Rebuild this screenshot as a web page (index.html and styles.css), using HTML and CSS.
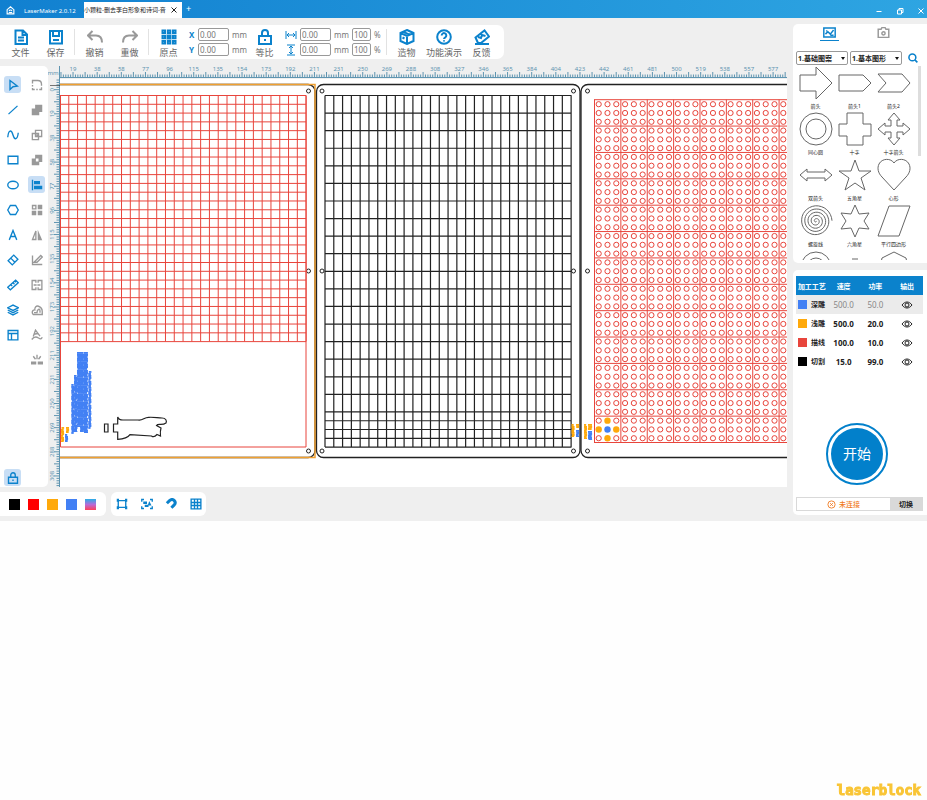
FILE: index.html
```html
<!DOCTYPE html>
<html lang="zh-CN">
<head>
  <meta charset="UTF-8">
  <title>LaserMaker 2.0.12</title>
  <link rel="stylesheet" href="styles.css">
</head>
<body>
  <div class="app">
    <header class="titlebar">
      <svg class="home" viewBox="0 0 16 16"><path d="M2 8V6.5L8 1.5l6 5V14H2V8M5 11.5h6M5.5 9a2.6 2.6 0 0 1 5 0"/></svg>
      <span class="app-name">LaserMaker 2.0.12</span>
      <div class="tab"><span class="tab-name">小颗粒-删去李白形象和诗词-音</span><button class="tab-close" aria-label="关闭标签"><svg viewBox="0 0 8 8"><path d="M1.500 1.500l5 5M6.500 1.500l-5 5"/></svg></button></div>
      <button class="tab-add" aria-label="新建">+</button>
      <div class="window-buttons">
        <button aria-label="最小化"><svg viewBox="0 0 8 8"><path d="M1.500 4.500h5"/></svg></button>
        <button aria-label="还原"><svg viewBox="0 0 8 8"><path d="M1.500 3h4v4h-4zM3 3V1.500h4v4H5.500"/></svg></button>
        <button aria-label="关闭"><svg viewBox="0 0 8 8"><path d="M1.500 1.500l5 5M6.500 1.500l-5 5"/></svg></button>
      </div>
    </header>

    <div class="body">
      <main class="main">
        <div class="toolbar">
          <button class="tool"><svg viewBox="0 0 16 16"><path d="M2.500 1.500h7.500l4 4v9.500H2.500zM9.500 1.500v4.500H14M5 8.500h6M5 11.500h6"/></svg>文件</button>
          <button class="tool"><svg viewBox="0 0 16 16"><path d="M2 2h12v12.500H2zM5 2v5h6V2M5 11h6"/></svg>保存</button>
          <span class="sep"></span>
          <button class="tool gray"><svg viewBox="0 0 16 16"><path d="M5.500 2L1 6.500 5.500 11M1.500 6.500H9c4 0 6 3 6 7"/></svg>撤销</button>
          <button class="tool gray"><svg viewBox="0 0 16 16"><path d="M10.500 2L15 6.500 10.500 11M14.500 6.500H7c-4 0-6 3-6 7"/></svg>重做</button>
          <span class="sep"></span>
          <button class="tool"><svg class="dots" viewBox="0 0 16 16"><path d="M1.500 1.500h2.500v2.500h-2.500zM6.800 1.500h2.500v2.500H6.800zM12 1.500h2.500v2.500h-2.500zM1.500 6.800h2.500v2.500h-2.500zM12 6.800h2.500v2.500h-2.500zM1.500 12h2.500v2.500h-2.500zM6.800 12h2.500v2.500H6.800zM12 12h2.500v2.500h-2.500z"/><path class="fill" d="M5.500 5.500h5v5h-5z"/></svg>原点</button>
          <div class="fields coords">
            <label><b>X</b><input value="0.00"><span>mm</span></label>
            <label><b>Y</b><input value="0.00"><span>mm</span></label>
          </div>
          <button class="tool"><svg viewBox="0 0 16 16"><path d="M2 7h12v8H2zM5 7V4a3 3 0 0 1 6 0v3M8 10v2"/></svg>等比</button>
          <div class="fields size">
            <div class="field-row">
              <svg viewBox="0 0 12 12"><path d="M1 2v8M11 2v8M2 6h8M4 4L2 6l2 2M8 4l2 2-2 2"/></svg>
              <input value="0.00" aria-label="宽度"><span>mm</span><input class="short" value="100" aria-label="宽度百分比"><span>%</span>
            </div>
            <div class="field-row">
              <svg viewBox="0 0 12 12"><path d="M2 1h8M2 11h8M6 2v8M4 4l2-2 2 2M4 8l2 2 2-2"/></svg>
              <input value="0.00" aria-label="高度"><span>mm</span><input class="short" value="100" aria-label="高度百分比"><span>%</span>
            </div>
          </div>
          <span class="sep"></span>
          <button class="tool"><svg viewBox="0 0 16 16"><path d="M8 1l6.500 3v8L8 15l-6.500-3V4zM1.500 4L8 7l6.500-3M8 7v8M4.500 2.800L11 5.800M3.500 8.500l2 1"/></svg>造物</button>
          <button class="tool wide"><svg viewBox="0 0 16 16"><circle cx="8" cy="8" r="6.800"/><path d="M5.700 6.500a2.300 2.300 0 1 1 3.600 1.800C8.300 8.900 8 9.200 8 10M8 11.200v1.300"/></svg>功能演示</button>
          <button class="tool"><svg viewBox="0 0 16 16"><path d="M1 15h14M4 14L1.500 8.500 10.500 1.500l4.500 6L7 14zM4 8l3 1 1-3 3.500 1"/></svg>反馈</button>
        </div>

        <div class="workspace">
          <nav class="sidebar">
            <div class="tool-column">
              <button class="on" aria-label="选择"><svg viewBox="0 0 16 16"><path d="M4 2l10 7.500-6 .8L4 14z"/></svg></button>
              <button aria-label="直线"><svg viewBox="0 0 16 16"><path d="M2 13.500L14 2.500"/></svg></button>
              <button aria-label="曲线"><svg viewBox="0 0 16 16"><path d="M1 11C2 0 6 1 8 8s6 7 7-3"/></svg></button>
              <button aria-label="矩形"><svg viewBox="0 0 16 16"><path d="M1.500 3h13v10h-13z"/></svg></button>
              <button aria-label="椭圆"><svg viewBox="0 0 16 16"><ellipse cx="8" cy="8" rx="7" ry="5"/></svg></button>
              <button aria-label="多边形"><svg viewBox="0 0 16 16"><path d="M4.500 2h7L15 8l-3.500 6h-7L1 8z"/></svg></button>
              <button aria-label="文字"><svg viewBox="0 0 16 16"><path d="M3 14.500L8 2l5 12.500M5 10h6"/></svg></button>
              <button aria-label="橡皮"><svg viewBox="0 0 16 16"><path d="M1.500 9L9 1.500 14.500 7 7 14.500zM5 5.500l5.500 5.500"/></svg></button>
              <button aria-label="测量"><svg viewBox="0 0 16 16"><path d="M1 11L11.500 1.500 15 5 4.500 14.500zM5 7.500l2 2M8 5l2 2M10.500 3l1.500 1.500"/></svg></button>
              <button aria-label="图层"><svg viewBox="0 0 16 16"><path d="M1 5l7-3.500L15 5 8 8.500zM1 8l7 3.500L15 8M1 11l7 3.500 7-3.500"/></svg></button>
              <button aria-label="排版"><svg viewBox="0 0 16 16"><path d="M1.500 2h13v12.500h-13zM1.500 6h13M6 6v8.500"/></svg></button>
              <button class="on lock" aria-label="锁定"><svg viewBox="0 0 16 16"><path d="M2 7h12v8H2zM5 7V4a3 3 0 0 1 6 0v3M8 10v2"/></svg></button>
            </div>
            <div class="tool-column gray">
              <button aria-label="圆角"><svg viewBox="0 0 16 16"><path d="M2 6V2h7c3 0 5 2 5 5v2M2 8v2M2 12v2h3M7 14h2M11 14h3v-3"/></svg></button>
              <button aria-label="并集"><svg viewBox="0 0 16 16"><path class="fill" d="M5.500 1H15v9.500h-4V15H1V6h4.500z"/></svg></button>
              <button aria-label="交集"><svg viewBox="0 0 16 16"><path d="M6 1.800h8.200V10H6zM1.800 6H10v8.200H1.800z"/><path class="fill" d="M7 7h3v3H7z"/></svg></button>
              <button aria-label="差集"><svg viewBox="0 0 16 16"><path class="fill" d="M5.500 1H15v9.500h-4V15H1V6h4.500zM6.500 6v4H10V6z" fill-rule="evenodd"/></svg></button>
              <button class="on" aria-label="对齐"><svg viewBox="0 0 16 16"><path d="M2 1v14"/><path class="fill" d="M4 2.500h8V7H4zM4 9h11v4.500H4z"/></svg></button>
              <button aria-label="阵列"><svg viewBox="0 0 16 16"><path d="M2 2h4.500v4.500H2z"/><path class="fill" d="M9 1h6v6H9zM1 9h6v6H1zM9 9h6v6H9z"/></svg></button>
              <button aria-label="镜像"><svg viewBox="0 0 16 16"><path d="M6.500 2.500V14H2z"/><path class="fill" d="M9 1l6 14H9z"/></svg></button>
              <button aria-label="角度"><svg viewBox="0 0 16 16"><path d="M2 2v12h13M4 11L13 2l2 2-7 7H5z"/></svg></button>
              <button aria-label="拆分"><svg viewBox="0 0 16 16"><path d="M6.500 5V2h-5v12h5v-3M9.500 5V2h5v12h-5v-3M3.500 8h4M8.500 8h4"/></svg></button>
              <button aria-label="偏移"><svg viewBox="0 0 16 16"><path d="M3 14C0 11 3 7 5 8c0-4 2-6 5-5s5 4 5 7v4zM4 11.500h4c0-4 4-7 4-2v2"/></svg></button>
              <button aria-label="路径文字"><svg viewBox="0 0 16 16"><path d="M1 14c3-4 6-4 9-2s4 1 5-1M3 10L6 1.500l6 8M4 7l5-1"/></svg></button>
              <button aria-label="打散"><svg viewBox="0 0 16 16"><path d="M3 3l3 4M8 1v6M13 3l-3 4"/><path class="fill" d="M0 10h7v4H0zM9 10h7v4H9z"/></svg></button>
            </div>
          </nav>
          <svg id="stage" class="stage" viewBox="48 66 739 421" preserveAspectRatio="xMinYMin slice"></svg>
        </div>

        <footer class="bottombar">
          <div class="palette">
            <button class="swatch black" aria-label="黑色"></button>
            <button class="swatch red" aria-label="红色"></button>
            <button class="swatch orange" aria-label="橙色"></button>
            <button class="swatch blue" aria-label="蓝色"></button>
            <button class="swatch mixed" aria-label="渐变"></button>
          </div>
          <div class="view-tools">
            <button aria-label="适应画布"><svg viewBox="0 0 16 16"><path d="M3 3.500h10v9H3z"/><path class="fill" d="M1 1h3v4H1zM12 1h3v4h-3zM1 11h3v4H1zM12 11h3v4h-3z"/></svg></button>
            <button aria-label="适应图形"><svg viewBox="0 0 16 16"><path d="M1 5V2h3M12 2h3v3M1 11v3h3M12 14h3v-3"/><path class="fill" d="M3 4.500h5V8H3zM11 4l3 6H9zM5 9h5v3H5z"/></svg></button>
            <button aria-label="吸附"><svg class="magnet" viewBox="0 0 16 16"><path d="M2.500 7L6 3.500c5-4 10 2 6 6L8.500 13"/></svg></button>
            <button aria-label="网格"><svg viewBox="0 0 16 16"><path d="M1.500 1.500h13v13h-13zM1.500 6h13M1.500 10h13M6 1.500v13M10 1.500v13"/></svg></button>
          </div>
        </footer>
      </main>

      <aside class="side">
        <section class="panel library">
          <div class="library-tabs">
            <button class="on" aria-label="图库"><svg viewBox="0 0 16 16"><path d="M1 2.500h14v11H1zM3 10l3-3 3 3 4-5M4 5.500l1 1M9 11.500h4"/></svg></button>
            <button aria-label="相机"><svg viewBox="0 0 16 16"><path d="M1.500 4H5l1-2h4l1 2h3.500v10h-13z"/><circle cx="8" cy="9" r="2"/></svg></button>
          </div>
          <div class="filters">
            <span class="select"><select aria-label="图案分类"><option>1.基础图案</option></select></span>
            <span class="select"><select aria-label="图形分类"><option>1.基本图形</option></select></span>
            <button class="search" aria-label="搜索"><svg viewBox="0 0 16 16"><circle cx="7" cy="7" r="5.500"/><path d="M11 11l4 4"/></svg></button>
          </div>
          <div class="shapes">
            <figure><svg viewBox="0 0 34 34"><path d="M1 9h16V1l16 16-16 16v-8H1z"/></svg><figcaption>箭头</figcaption></figure>
            <figure><svg viewBox="0 0 34 34"><path d="M1 9h24l8 8-8 8H1z"/></svg><figcaption>箭头1</figcaption></figure>
            <figure><svg viewBox="0 0 34 34"><path d="M1 8h24l8 9-8 9H1l8-9z"/></svg><figcaption>箭头2</figcaption></figure>
            <figure><svg viewBox="0 0 34 34"><circle cx="17" cy="17" r="16"/><circle cx="17" cy="17" r="10"/></svg><figcaption>同心圆</figcaption></figure>
            <figure><svg viewBox="0 0 34 34"><path d="M9 1h16v11h8v12h-8v9H9v-9H1V12h8z"/></svg><figcaption>十字</figcaption></figure>
            <figure><svg viewBox="0 0 34 34"><path d="M17 1l6 7h-3v6h6v-3l7 6-7 6v-3h-6v6h3l-6 7-6-7h3v-6H8v3l-7-6 7-6v3h6V8h-3z"/></svg><figcaption>十字箭头</figcaption></figure>
            <figure><svg viewBox="0 0 34 34"><path d="M1 17l7-6v3h18v-3l7 6-7 6v-3H8v3z"/></svg><figcaption>双箭头</figcaption></figure>
            <figure><svg viewBox="0 0 34 34"><path d="M17 2l4 11h12l-10 7 4 12-10-7-10 7 4-12-10-7h12z"/></svg><figcaption>五角星</figcaption></figure>
            <figure><svg viewBox="0 0 34 34"><path d="M17 32L5 19C1 15 0 10 2 6c3-6 12-6 15-1 3-5 12-5 15 1 2 4 1 9-3 13z"/></svg><figcaption>心形</figcaption></figure>
            <figure><svg viewBox="0 0 34 34"><path id="spiral" d=""/></svg><figcaption>螺旋线</figcaption></figure>
            <figure><svg viewBox="0 0 34 34"><path d="M17 1l4 9 10-1-5 8 5 8-10-1-4 9-4-9-10 1 5-8-5-8 10 1z"/></svg><figcaption>六角星</figcaption></figure>
            <figure><svg viewBox="0 0 34 34"><path d="M12 2h21L22 32H1z"/></svg><figcaption>平行四边形</figcaption></figure>
            <figure><svg viewBox="0 0 34 34"><circle cx="17" cy="17" r="15"/><circle cx="17" cy="17" r="9"/></svg></figure>
            <figure><svg viewBox="0 0 34 34"><path d="M14 9h6"/></svg></figure>
            <figure><svg viewBox="0 0 34 34"><path d="M17 2l12 6 3 14-8 10H10L2 22 5 8z"/></svg></figure>
          </div>
        </section>

        <section class="panel job">
          <table>
            <thead><tr><th>加工工艺</th><th>速度</th><th>功率</th><th>输出</th></tr></thead>
            <tbody>
              <tr class="current"><td><i class="blue"></i>深雕</td><td>500.0</td><td>50.0</td><td><svg viewBox="0 0 12 8"><path d="M1 4c3-4 7-4 10 0-3 4-7 4-10 0z"/><circle cx="6" cy="4" r="2"/></svg></td></tr>
              <tr><td><i class="orange"></i>浅雕</td><td>500.0</td><td>20.0</td><td><svg viewBox="0 0 12 8"><path d="M1 4c3-4 7-4 10 0-3 4-7 4-10 0z"/><circle cx="6" cy="4" r="2"/></svg></td></tr>
              <tr><td><i class="crimson"></i>描线</td><td>100.0</td><td>10.0</td><td><svg viewBox="0 0 12 8"><path d="M1 4c3-4 7-4 10 0-3 4-7 4-10 0z"/><circle cx="6" cy="4" r="2"/></svg></td></tr>
              <tr><td><i class="black"></i>切割</td><td>15.0</td><td>99.0</td><td><svg viewBox="0 0 12 8"><path d="M1 4c3-4 7-4 10 0-3 4-7 4-10 0z"/><circle cx="6" cy="4" r="2"/></svg></td></tr>
            </tbody>
          </table>
          <button class="start">开始</button>
          <div class="status">
            <span><svg viewBox="0 0 10 10"><circle cx="5" cy="5" r="4"/><path d="M3.500 3.500l3 3M6.500 3.500l-3 3"/></svg>未连接</span>
            <button>切换</button>
          </div>
        </section>
      </aside>
    </div>
  </div>
  <div class="watermark">laserblock</div>
  <script src="script.js"></script>
</body>
</html>
```

FILE: styles.css
```css
* { box-sizing: border-box; }
body { margin: 0; min-height: 100vh; background: #fefefe; font-family: "Noto Sans", "Noto Sans CJK SC", sans-serif; font-size: 7px; color: #222; }
button { border: 0; padding: 0; background: none; font: inherit; color: inherit; cursor: pointer; }
svg { display: block; fill: none; stroke: currentColor; }
.fill { fill: currentColor; stroke: none; }
.app { background: #efefef; }

.titlebar { display: flex; align-items: center; height: 18px; background: linear-gradient(90deg, #1180d0, #2ea5e2); color: #fff; }
.home { width: 9px; height: 9px; margin: 2px 9px 0 6px; stroke-width: 2; }
.app-name { width: 60px; padding-top: 3px; line-height: 8px; font-size: 6px; white-space: nowrap; }
.tab { display: flex; align-items: center; width: 98px; height: 16px; margin-top: 2px; background: #fff; color: #222; }
.tab-name { width: 84px; white-space: nowrap; font-size: 6px; line-height: 16px; }
.tab-close svg { width: 8px; height: 8px; margin: 0 2px 1px; }
.tab-add { width: 13px; font-size: 9px; line-height: 16px; }
.window-buttons { display: flex; gap: 13px; margin: 3px 2px 0 auto; }
.window-buttons svg { width: 8px; height: 8px; }

.body { display: flex; gap: 6px; }
.main { flex: 1; min-width: 0; padding: 7px 0 5px; }

.toolbar { display: flex; align-items: center; width: 504px; height: 34px; padding: 0 3px; background: #fff; border-radius: 0 7px 7px 0; }
.tool { width: 35px; flex: none; padding-top: 3px; color: #666; font-size: 9px; line-height: 12px; white-space: nowrap; }
.tool.wide { width: 40px; }
.tool svg { width: 16px; height: 16px; margin: 0 auto 2px; color: #0b82cc; stroke-width: 2; }
.tool.gray svg { color: #999; stroke-width: 2; }
.sep { width: 1px; height: 26px; margin: 0 2px 0 1px; background: #e2e2e2; }
.fields { display: flex; flex-direction: column; gap: 2px; color: #777; font-size: 8px; line-height: 13px; }
.fields label, .field-row { display: flex; align-items: center; gap: 3px; }
.coords { width: 58px; margin-left: 3px; }
.coords b { width: 6px; color: #0b82cc; }
.size { width: 100px; margin-left: 3px; }
.size svg { width: 12px; height: 12px; color: #0b82cc; }
.fields input { width: 31px; height: 13px; padding: 0 1px; border: 1px solid #999; border-radius: 2px; background: #fff; color: #777; font: inherit; }
.fields input.short { width: 19px; }

.workspace { display: flex; margin-top: 7px; }
.sidebar { display: flex; flex: none; gap: 7px; width: 48px; padding: 10px 4px 1px; background: #fff; border-radius: 0 5px 5px 0; }
.tool-column { display: flex; flex-direction: column; gap: 8px; width: 17px; color: #0b82cc; }
.tool-column.gray { color: #999; }
.tool-column button { display: grid; place-items: center; width: 17px; height: 17px; border-radius: 3px; }
.tool-column button.on { background: #c8def5; color: #0b82cc; }
.tool-column button.lock { margin: auto 0 0; }
.tool-column svg { width: 12px; height: 12px; stroke-width: 1.8; }
.stage { flex: 1; min-width: 0; height: 421px; stroke: none; }
.stage text { font-size: 6px; fill: #5e94b0; text-anchor: middle; }
.stage .ticks { stroke: #5e94b0; stroke-width: 1; }
.stage .cut { stroke: #222; }
.stage .red-line { stroke: #e8453c; stroke-width: 1; }
.stage .selection { stroke: #f0a030; }

.bottombar { display: flex; gap: 5px; margin-top: 5px; height: 24px; }
.palette, .view-tools { display: flex; align-items: center; background: #fff; border-radius: 6px; }
.palette { gap: 8px; width: 106px; padding-left: 9px; border-radius: 0 6px 6px 0; }
.view-tools { justify-content: space-between; width: 95px; padding: 0 4px 0 5px; color: #0b82cc; }
.view-tools svg { width: 12px; height: 12px; stroke-width: 1.8; }
.view-tools .magnet { stroke-width: 4; }
.swatch { width: 11px; height: 11px; }
.black { background: #000; }
.red { background: #f00; }
.orange { background: #ffa90b; }
.blue { background: #4280f4; }
.crimson { background: #e8453c; }
.mixed { background: linear-gradient(#28aee8, #b76bd8, #ff4058); }

.side { display: flex; flex-direction: column; flex: none; gap: 7px; width: 134px; padding: 6px 0; }
.panel { background: #fff; border-radius: 5px 0 0 5px; }
.library { height: 239px; overflow: hidden; background: linear-gradient(#ddd, #ddd) 125px 42px / 3px 90px no-repeat #fff; }
.library-tabs { display: flex; justify-content: space-around; padding: 0 17px 0 10px; height: 27px; color: #999; }
.library-tabs button { width: 19px; height: 17px; }
.library-tabs button.on { color: #0b82cc; border-bottom: 1px solid #0b82cc; }
.library-tabs svg { width: 13px; height: 13px; margin: 0 auto; stroke-width: 1.8; }
.filters { display: flex; align-items: center; gap: 2px; padding: 0 9px 0 3px; height: 14px; }
.select { position: relative; flex: 1; }
.select::after { content: ""; position: absolute; right: 3px; top: 6px; border: 2px solid transparent; border-top: 3px solid #111; }
.select select { appearance: none; display: block; width: 100%; height: 14px; padding: 0 1px; border: 1px solid #999; border-radius: 2px; background: #fff; color: #222; font: inherit; font-weight: bold; }
.search { margin-left: 4px; color: #0b82cc; }
.search svg { width: 10px; height: 10px; stroke-width: 2.5; }
.shapes { display: grid; grid-template-columns: repeat(3, 1fr); height: 194px; margin: 1px 14px 0 3px; overflow: hidden; }
.shapes figure { height: 46px; margin: 0; text-align: center; }
.shapes svg { width: 34px; height: 34px; margin: 0 auto; stroke: #666; stroke-width: 1; }
.shapes figcaption { margin-top: 2px; font-size: 5px; line-height: 8px; white-space: nowrap; }

.job { display: flex; flex-direction: column; height: 245px; padding: 6px 4px 4px 3px; }
table { width: 100%; border-collapse: collapse; table-layout: fixed; text-align: center; font-weight: bold; }
th { height: 19px; padding: 0; background: #0b82cc; color: #fff; white-space: nowrap; }
td { height: 19px; padding: 0; font-size: 8px; line-height: 10px; white-space: nowrap; }
td:first-child { display: flex; align-items: center; gap: 4px; padding-left: 2px; font-size: 7px; }
td i { width: 9px; height: 9px; }
td svg { width: 12px; height: 8px; margin: 0 auto; }
.current { background: #ebebeb; }
.current td + td { color: #888; font-weight: normal; }
.current td:last-child { color: #222; }
.start { width: 62px; height: 62px; margin: auto auto 12px 30px; border: 2px solid #0280cb; border-radius: 50%; padding: 3px; background: #0280cb content-box; color: #fff; font-size: 14px; line-height: 52px; }
.status { display: flex; height: 14px; border: 1px solid #d9d9d9; }
.status span { display: flex; flex: 1; align-items: center; justify-content: center; gap: 3px; color: #f07a20; font-weight: 500; }
.status svg { width: 9px; height: 9px; }
.status button { width: 32px; background: #d9d9d9; font-weight: bold; }

.watermark { position: fixed; right: 6px; bottom: 1px; color: #f9c535; font: bold 14px/18px "DejaVu Sans Mono", monospace; -webkit-text-stroke: 1px #f9c535; }
```

FILE: script.js
```js
const stage = document.getElementById('stage');
const CELL = 8.79;
const parts = [];

const path = (cls, d, extra = '') => parts.push(`<path class="${cls}" d="${d}" fill="none" ${extra}/>`);
const rect = (x, y, w, h, fill) => parts.push(`<rect x="${x}" y="${y}" width="${w}" height="${h}" fill="${fill}"/>`);
const board = (x, w) => parts.push(`<rect class="cut" x="${x}" y="84.5" width="${w}" height="373" rx="7" fill="none" stroke-width="1.3"/>`);

rect(48, 66, 4000, 421, '#efefef');
rect(60, 79, 4000, 408, '#fff');

// boards with their screw holes
board(-20, 335);
board(316.5, 263.5);
board(581, 263.5);
for (const x of [308.5, 322, 573.5, 587.5]) {
  for (const y of [91, 271, 451]) {
    parts.push(`<circle class="cut" cx="${x}" cy="${y}" r="2" fill="none"/>`);
  }
}
path('selection', 'M48 84.500H315V457.500H48', 'stroke-width="1.5"');

// left board: square grid
let d = '';
for (let i = 0; i <= 28; i++) {
  const p = i * CELL;
  d += `M${60 + p} 95.500V341.500M60 ${95.5 + p}H306`;
}
path('red-line', d + 'M60.500 95.500V447H306V95.500');

// middle board: tall cells, the last rows are half height
d = '';
for (let i = 0; i <= 28; i++) d += `M${325 + i * CELL} 95.500V447`;
for (let i = 0; i <= 18; i++) d += `M325 ${95.5 + i * CELL * 2}H571.500`;
for (let i = 37; i <= 40; i++) d += `M325 ${95.5 + i * CELL}H571.500`;
path('cut', d, 'stroke-width="1.2"');

// right board: blocks of 3 x 3 holes
d = '';
for (let i = 0; i <= 13; i++) d += `M594 ${99.7 + i * CELL * 3}H860`;
for (let i = 0; i <= 10; i++) d += `M${594.5 + i * CELL * 3} 99.700V442.400`;
path('red-line', d);
const special = { '36,1': '#ffa90b', '37,0': '#ffa90b', '37,1': '#4280f4', '37,2': '#ffa90b', '38,1': '#ffa90b' };
for (let r = 0; r < 39; r++) {
  for (let c = 0; c < 28; c++) {
    const color = special[r + ',' + c];
    const cx = 598.7 + c * CELL, cy = 104.2 + r * CELL;
    parts.push(color
      ? `<circle cx="${cx}" cy="${cy}" r="3.200" fill="${color}"/>`
      : `<circle class="red-line" cx="${cx}" cy="${cy}" r="2.600" fill="none"/>`);
  }
}

// engraved columns of tiny writing
function writing(x, top, bottom, width, color) {
  for (let y = top, n = 0; y < bottom; y += 2, n++) {
    const shift = (n * 7 + Math.round(x)) % 3;
    rect(x + (shift === 1 ? 0.5 : 0), y, width - shift * 0.4, Math.min(1.9, bottom - y), color);
    if (n % 4) rect(x + 0.4, y, width - 0.8, Math.min(2.2, bottom - y), color);
  }
}
const BLUE = '#4280f4', ORANGE = '#ffa90b';
writing(71.3, 384, 434, 3.2, BLUE);
writing(74, 375, 432, 3.4, BLUE);
writing(77, 352, 427, 3.8, BLUE);
writing(80, 352, 432, 4, BLUE);
writing(83.5, 352, 433, 4.4, BLUE);
writing(88.3, 371, 429, 3, BLUE);
for (const [x, y, w, h] of [[61, 427, 3, 15], [66, 427, 3, 6], [571.5, 424, 3, 13], [576, 424, 3, 4], [584, 424, 3, 15], [588, 424, 4, 6]]) {
  writing(x, y, y + h, w, ORANGE);
}
for (const [x, y, w, h] of [[65, 434, 3, 8], [576, 430, 3, 7], [588, 431, 4, 9]]) {
  writing(x, y, y + h, w, BLUE);
}

// figure outline
path('cut', 'M104.500 424h3.500v8h-3.500zM117.700 417Q118.500 420 123 420H138C143 421 144 417 149 417.300C154 417 158 418 162 418C166 418 167 421 166 423C162 426 158 423 156.500 425.500L161 428Q160 431 160.500 436L157 434.500Q154 438 151.500 436L130 434.700Q127 439 117.700 439.300V432H113.500V424H117.700Z', 'stroke-width="1.2"');

// rulers
const labels = [0, 19, 38, 58, 77, 96, 115, 135, 154, 173, 192, 211, 231, 250, 269, 288, 308, 327, 346, 365, 384, 404, 423, 442, 461, 481, 500, 519, 538, 557, 577];
const STEP = 24.14;
rect(48, 79, 11, 408, '#efefef');
d = 'M60 77.500H2000M59.500 66V487';
for (let i = 0; i < 330; i++) {
  const x = 48.9 + i * STEP / 10;
  if (x > 60) d += `M${x} 77v-${i % 5 ? 2.5 : 5}`;
  const y = 89.7 + (i - 4) * STEP / 10;
  if (y < 487) d += `M59 ${y}h-${(i - 4) % 5 ? 2.5 : 5}`;
}
path('ticks', d);
path('cut', 'M50 85.500H60', 'stroke-opacity=".6"');
parts.push('<text x="53" y="75">mm</text>');
labels.forEach((n, i) => {
  const x = 48.9 + i * STEP, y = 89.7 + i * STEP;
  if (i) parts.push(`<text x="${x}" y="71">${n}</text>`);
  if (y < 487) parts.push(`<text transform="translate(54 ${y}) rotate(-90)">${n}</text>`);
});

stage.innerHTML = parts.join('');

// spiral icon in the shape library
let spiral = 'M17 17';
for (let t = 0; t <= 5 * 2 * Math.PI; t += 0.2) {
  const r = t / (10 * Math.PI) * 16;
  spiral += `L${(17 + r * Math.cos(t)).toFixed(1)} ${(17 + r * Math.sin(t)).toFixed(1)}`;
}
document.getElementById('spiral').setAttribute('d', spiral);
```
